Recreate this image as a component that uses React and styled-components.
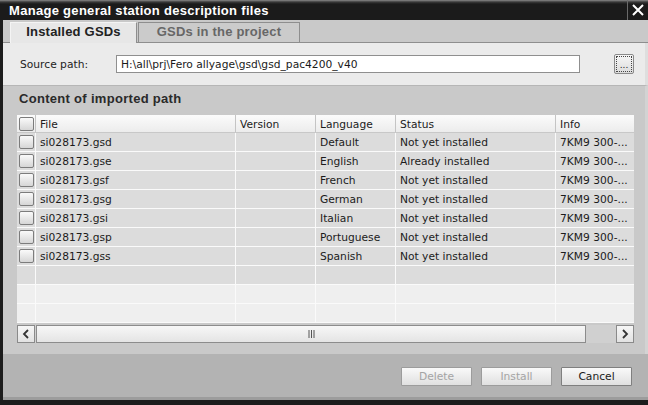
import React from "react";
import styled, { createGlobalStyle } from "styled-components";

const Global = createGlobalStyle`
  html, body { margin: 0; padding: 0; background: #1c1c1c; }
  * { box-sizing: border-box; }
`;

const Window = styled.div`
  width: 648px;
  height: 405px;
  display: flex;
  flex-direction: column;
  background: #1c1c1c;
  padding-bottom: 5px;
  font-family: "DejaVu Sans", sans-serif;
  font-size: 10.7px;
  color: #1e1e1e;
  overflow: hidden;
`;

const TitleBar = styled.div`
  height: 20px;
  flex: none;
  display: flex;
  align-items: center;
  background: linear-gradient(#8a8a8a 0px, #3a3a3a 2px, #1b1b1b 4px, #1b1b1b 100%);
`;

const Title = styled.div`
  flex: 1;
  padding-left: 9px;
  padding-top: 1px;
  color: #ffffff;
  font-family: "Liberation Sans", Arial, sans-serif;
  font-weight: bold;
  font-size: 13px;
  letter-spacing: 0.3px;
  white-space: nowrap;
`;

const CloseButton = styled.div`
  width: 21px;
  height: 20px;
  display: flex;
  align-items: center;
  justify-content: center;
  border-left: 1px solid #6a6a6a;
`;

const Body = styled.div`
  flex: 1;
  display: flex;
  flex-direction: column;
  margin-left: 3px;
  min-height: 0;
`;

const TabBar = styled.div`
  height: 23px;
  flex: none;
  display: flex;
  align-items: flex-end;
  padding-left: 7px;
  background: #c9c9c9;
  border-bottom: 1px solid #8e8e8e;
`;

const Tab = styled.div`
  height: ${(p) => (p.$active ? "21px" : "20px")};
  width: ${(p) => p.$w}px;
  margin-bottom: ${(p) => (p.$active ? "-1px" : "0")};
  display: flex;
  align-items: center;
  justify-content: center;
  padding-bottom: ${(p) => (p.$active ? "3px" : "2px")};
  font-family: "Liberation Sans", Arial, sans-serif;
  font-weight: bold;
  font-size: 13px;
  letter-spacing: 0.2px;
  color: ${(p) => (p.$active ? "#222" : "#676767")};
  background: ${(p) => (p.$active ? "#e7e7e7" : "#cbcbcb")};
  border: 1px solid ${(p) => (p.$active ? "#f4f4f4" : "#8e8e8e")};
  border-right-color: #8e8e8e;
  border-bottom: none;
  margin-left: ${(p) => (p.$active ? "0" : "1px")};
`;

const SourceArea = styled.div`
  height: 42px;
  flex: none;
  display: flex;
  align-items: center;
  padding-left: 17px;
  background: #ebebeb;
  border-right: 3px solid #dedede;
`;

const Label = styled.div`
  width: 96px;
  color: #222;
`;

const PathInput = styled.div`
  width: 464px;
  height: 18px;
  display: flex;
  align-items: center;
  padding-left: 4px;
  background: #ffffff;
  border: 1px solid #8f8f8f;
  color: #1a1a1a;
  white-space: nowrap;
`;

const BrowseButton = styled.div`
  width: 20px;
  height: 20px;
  margin-left: 34px;
  border: 1px solid #8a8a8a;
  border-radius: 2px;
  background: linear-gradient(#f6f6f6, #dcdcdc);
  padding: 1px;
  display: flex;
`;

const FocusRect = styled.div`
  flex: 1;
  border: 1px dotted #444;
  display: flex;
  align-items: flex-end;
  justify-content: center;
  font-size: 9px;
  line-height: 12px;
  color: #222;
`;

const Panel = styled.div`
  height: 269px;
  flex: none;
  display: flex;
  flex-direction: column;
  padding-left: 14px;
  background: #c9c9c9;
  border-top: 1px solid #b6b6b6;
  border-right: 3px solid #d3d3d3;
`;

const PanelTitle = styled.div`
  height: 29px;
  display: flex;
  align-items: center;
  padding-left: 2px;
  padding-bottom: 4px;
  font-family: "Liberation Sans", Arial, sans-serif;
  font-weight: bold;
  font-size: 13px;
  letter-spacing: 0.3px;
  color: #2a2a2a;
`;

const Table = styled.div`
  width: 617px;
  display: flex;
  flex-direction: column;
`;

const Row = styled.div`
  display: grid;
  grid-template-columns: 19px 200px 80px 80px 160px 1fr;
  height: ${(p) => (p.$header ? "18px" : "19px")};
  background: ${(p) =>
    p.$header
      ? "linear-gradient(#fbfbfb, #ececec)"
      : p.$light
      ? "#efefef"
      : "#dcdcdc"};
  border-bottom: 1px solid ${(p) => (p.$header ? "#c8c8c8" : "#fafafa")};
`;

const Cell = styled.div`
  display: flex;
  align-items: center;
  padding-left: ${(p) => (p.$box ? "2px" : "4px")};
  padding-top: ${(p) => (p.$header ? "1px" : "0")};
  border-right: 1px solid ${(p) => (p.$header ? "#c4c4c4" : "#fafafa")};
  white-space: nowrap;
  overflow: hidden;
  color: #1b1b1b;
  &:last-child { border-right: none; }
`;

const Check = styled.div`
  width: 15px;
  height: 14px;
  border: 1px solid #7c7c7c;
  border-radius: 2px;
  background: linear-gradient(#fafafa, #d6d6d6);
`;

const ScrollBar = styled.div`
  height: 18px;
  margin-top: 2px;
  display: flex;
  background: #d0d0d0;
`;

const ScrollButton = styled.div`
  width: 18px;
  height: 18px;
  display: flex;
  align-items: center;
  justify-content: center;
  border: 1px solid #8a8a8a;
  background: linear-gradient(#f6f6f6, #e2e2e2);
  margin-left: ${(p) => (p.$right ? "30px" : "0")};
`;

const Thumb = styled.div`
  flex: 1;
  margin-left: 1px;
  display: flex;
  align-items: center;
  justify-content: center;
  border: 1px solid #8c8c8c;
  background: linear-gradient(#f7f7f7, #e4e4e4);
`;

const Footer = styled.div`
  flex: 1;
  display: flex;
  align-items: center;
  justify-content: flex-end;
  gap: 9px;
  padding-right: 16px;
  padding-top: 1px;
  background: #b3b3b3;
  border-bottom: 3px solid #9c9c9c;
`;

const Button = styled.div`
  width: 71px;
  height: 19px;
  display: flex;
  align-items: center;
  justify-content: center;
  border: 1px solid ${(p) => (p.$disabled ? "#9c9c9c" : "#7f7f7f")};
  border-radius: 1px;
  background: linear-gradient(#f9f9f9, #e0e0e0);
  color: ${(p) => (p.$disabled ? "#a4a4a4" : "#1a1a1a")};
`;

const files = [
  ["si028173.gsd", "Default", "Not yet installed"],
  ["si028173.gse", "English", "Already installed"],
  ["si028173.gsf", "French", "Not yet installed"],
  ["si028173.gsg", "German", "Not yet installed"],
  ["si028173.gsi", "Italian", "Not yet installed"],
  ["si028173.gsp", "Portuguese", "Not yet installed"],
  ["si028173.gss", "Spanish", "Not yet installed"],
];

const Chevron = ({ dir }) => (
  <svg width="8" height="10" viewBox="0 0 8 10">
    <path
      d={dir === "left" ? "M6 1 L2 5 L6 9" : "M2 1 L6 5 L2 9"}
      fill="none"
      stroke="#333"
      strokeWidth="1.8"
    />
  </svg>
);

export default function App() {
  return (
    <>
      <Global />
      <Window>
        <TitleBar>
          <Title>Manage general station description files</Title>
          <CloseButton>
            <svg width="12" height="12" viewBox="0 0 12 12">
              <path d="M1 1 L11 11 M11 1 L1 11" stroke="#fff" strokeWidth="2" />
            </svg>
          </CloseButton>
        </TitleBar>
        <Body>
          <TabBar>
            <Tab $active $w={127}>Installed GSDs</Tab>
            <Tab $w={162}>GSDs in the project</Tab>
          </TabBar>
          <SourceArea>
            <Label>Source path:</Label>
            <PathInput>H:\all\prj\Fero allyage\gsd\gsd_pac4200_v40</PathInput>
            <BrowseButton>
              <FocusRect>...</FocusRect>
            </BrowseButton>
          </SourceArea>
          <Panel>
            <PanelTitle>Content of imported path</PanelTitle>
            <Table>
              <Row $header>
                <Cell $header $box>
                  <Check />
                </Cell>
                <Cell $header>File</Cell>
                <Cell $header>Version</Cell>
                <Cell $header>Language</Cell>
                <Cell $header>Status</Cell>
                <Cell $header>Info</Cell>
              </Row>
              {files.map(([f, lang, status]) => (
                <Row key={f}>
                  <Cell $box>
                    <Check />
                  </Cell>
                  <Cell>{f}</Cell>
                  <Cell />
                  <Cell>{lang}</Cell>
                  <Cell>{status}</Cell>
                  <Cell>7KM9 300-...</Cell>
                </Row>
              ))}
              {[0, 1, 2].map((i) => (
                <Row key={"e" + i} $light={i > 0}>
                  <Cell />
                  <Cell />
                  <Cell />
                  <Cell />
                  <Cell />
                  <Cell />
                </Row>
              ))}
              <ScrollBar>
                <ScrollButton>
                  <Chevron dir="left" />
                </ScrollButton>
                <Thumb>
                  <svg width="7" height="8" viewBox="0 0 7 8">
                    <path d="M1 0 V8 M3.5 0 V8 M6 0 V8" stroke="#555" strokeWidth="1" />
                  </svg>
                </Thumb>
                <ScrollButton $right>
                  <Chevron dir="right" />
                </ScrollButton>
              </ScrollBar>
            </Table>
          </Panel>
          <Footer>
            <Button $disabled>Delete</Button>
            <Button $disabled>Install</Button>
            <Button>Cancel</Button>
          </Footer>
        </Body>
      </Window>
    </>
  );
}
